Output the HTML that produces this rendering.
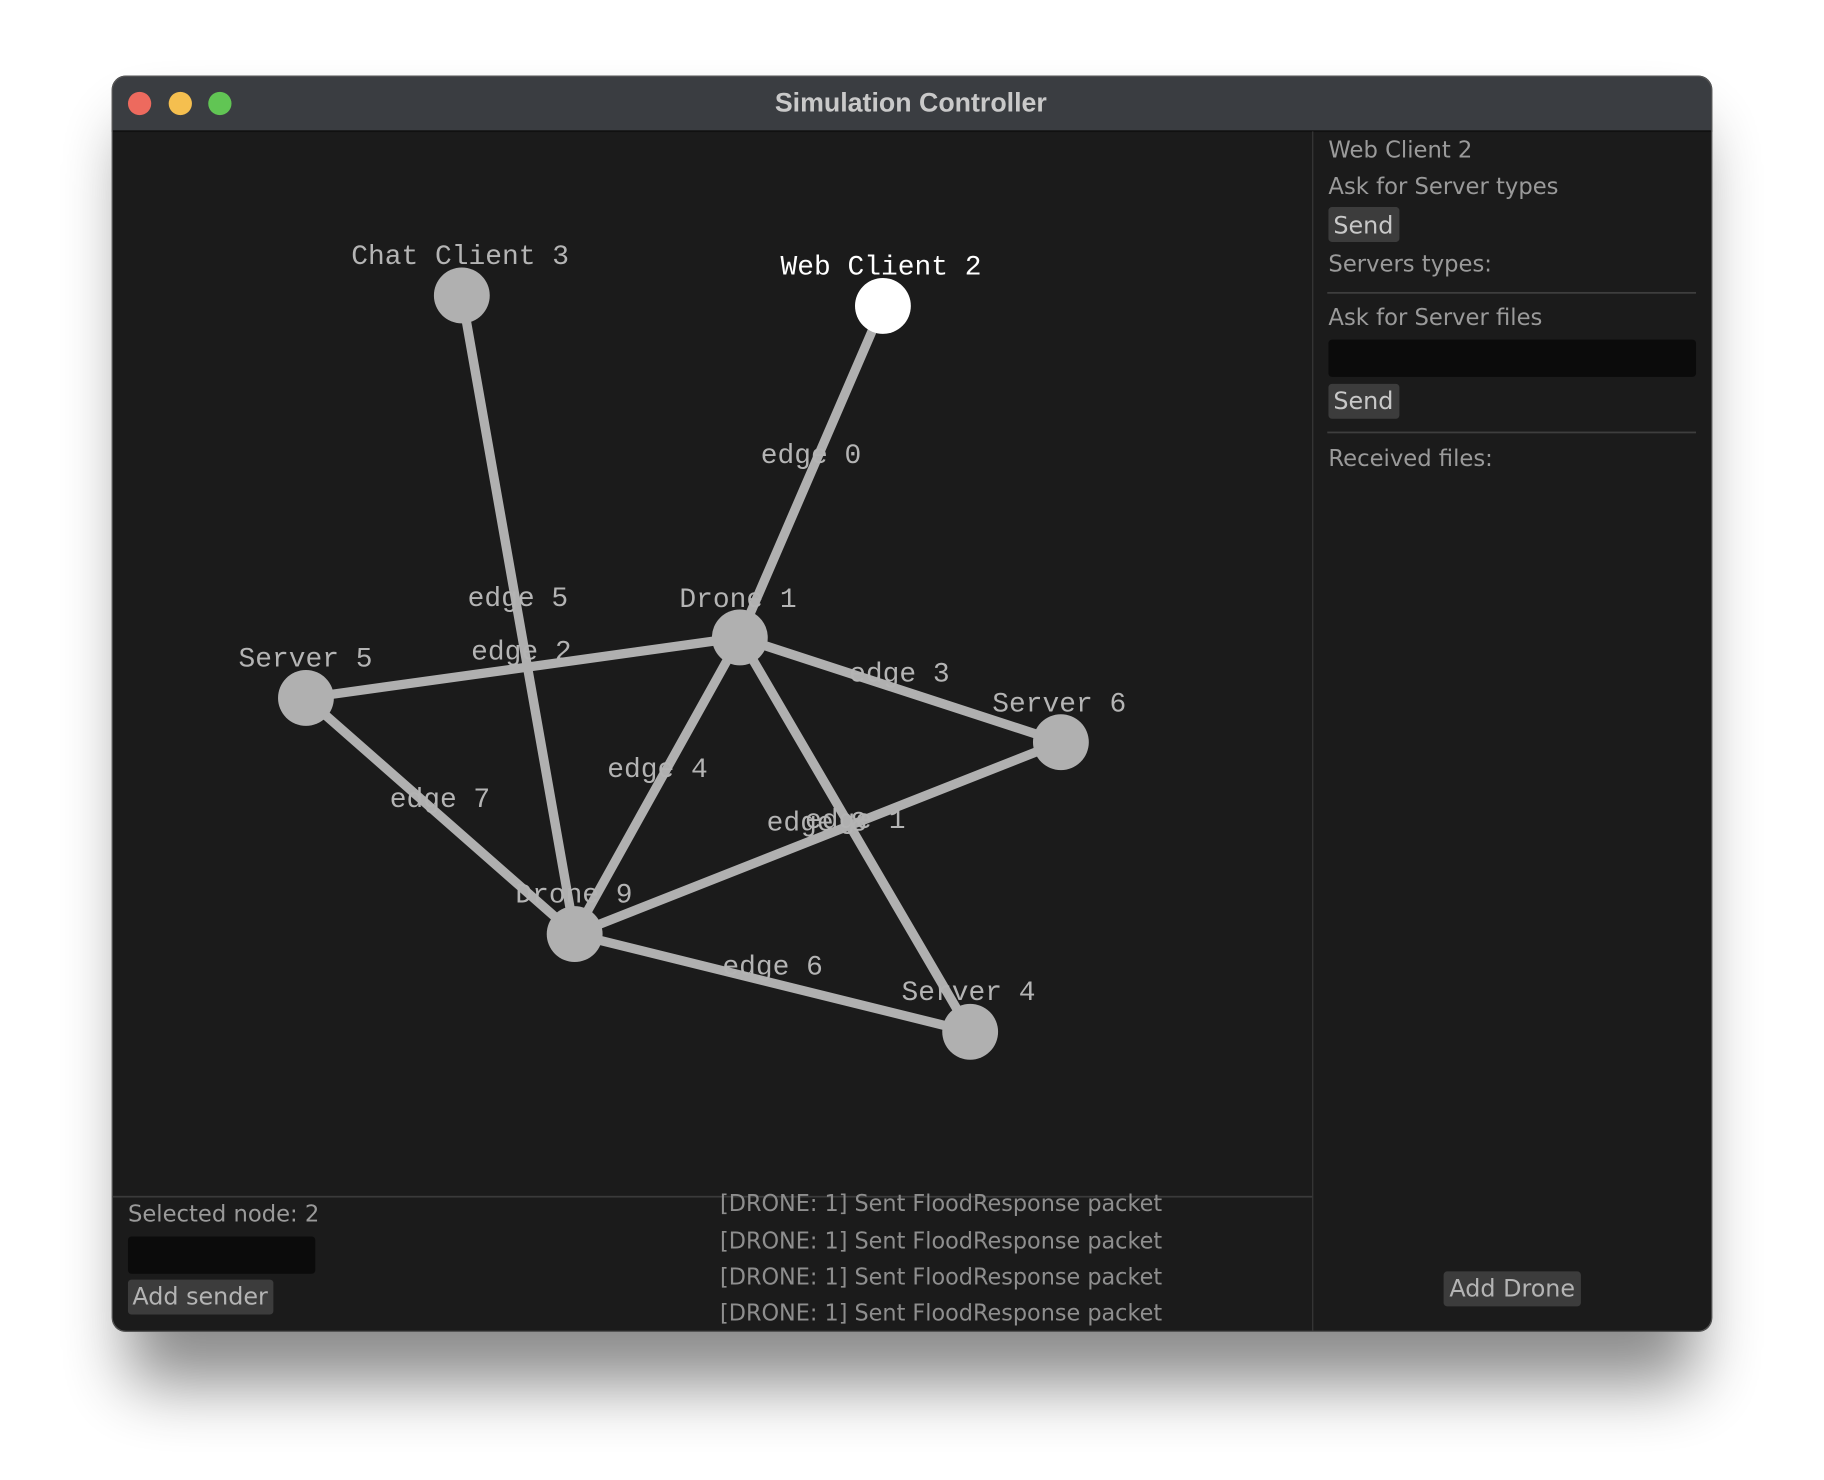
<!DOCTYPE html>
<html><head><meta charset="utf-8"><style>
html,body{margin:0;padding:0;background:#fff;width:1824px;height:1480px;overflow:hidden}
svg{display:block}
.m{font-family:"Liberation Mono","DejaVu Sans Mono",monospace;font-size:24px;fill:#b4b4b4}
.u{font-family:"DejaVu Sans","Liberation Sans",sans-serif;font-size:19.5px;fill:#9a9a9a}
</style></head><body>
<svg width="1824" height="1480" viewBox="0 0 1568 1272.3" xmlns="http://www.w3.org/2000/svg">
<defs>
<filter id="sh" x="-10%" y="-10%" width="120%" height="130%"><feGaussianBlur stdDeviation="28"/></filter>
<clipPath id="win"><rect x="96" y="65" width="1376" height="1080" rx="12"/></clipPath>
</defs>
<rect x="110" y="110" width="1348" height="1080" rx="14" fill="#000" opacity="0.45" filter="url(#sh)"/>
<g clip-path="url(#win)">
<rect x="96" y="65" width="1376" height="1080" fill="#1b1b1b"/>
<rect x="96" y="65" width="1376" height="48" fill="#3a3d41"/>
<rect x="96" y="112" width="1376" height="1.5" fill="#111"/>
</g>
<rect x="96.5" y="65.5" width="1375" height="1079" rx="12" fill="none" stroke="#555" stroke-width="1"/>
<circle cx="120" cy="89" r="10" fill="#ed6a5e"/>
<circle cx="155" cy="89" r="10" fill="#f5bf4f"/>
<circle cx="189" cy="89" r="10" fill="#61c554"/>
<text x="783" y="96" text-anchor="middle" font-family="Liberation Sans,sans-serif" font-weight="bold" font-size="23" fill="#c9c9c9">Simulation Controller</text>

<rect x="1128" y="113" width="1" height="1031" fill="#3a3a3a"/>
<rect x="97" y="1028" width="1031" height="1.5" fill="#3a3a3a"/>

<g stroke="#b0b0b0" stroke-width="8" stroke-linecap="round">
<line x1="759" y1="263" x2="636" y2="548"/>
<line x1="397" y1="254" x2="494" y2="803"/>
<line x1="263" y1="600" x2="636" y2="548"/>
<line x1="636" y1="548" x2="912" y2="638"/>
<line x1="636" y1="548" x2="494" y2="803"/>
<line x1="263" y1="600" x2="494" y2="803"/>
<line x1="494" y1="803" x2="912" y2="638"/>
<line x1="636" y1="548" x2="834" y2="887"/>
<line x1="494" y1="803" x2="834" y2="887"/>
</g>
<g fill="#b0b0b0">
<circle cx="397" cy="254" r="24"/>
<circle cx="636" cy="548" r="24"/>
<circle cx="263" cy="600" r="24"/>
<circle cx="912" cy="638" r="24"/>
<circle cx="494" cy="803" r="24"/>
<circle cx="834" cy="887" r="24"/>
</g>
<circle cx="759" cy="263" r="24" fill="#fff"/>

<g class="m" dominant-baseline="middle">
<text x="302" y="220.5">Chat Client 3</text>
<text x="671" y="229.5" fill="#fff">Web Client 2</text>
<text x="654" y="391.5">edge 0</text>
<text x="402" y="514.5">edge 5</text>
<text x="584" y="515.5">Drone 1</text>
<text x="405" y="560.5">edge 2</text>
<text x="205" y="566.5">Server 5</text>
<text x="730" y="579.5">edge 3</text>
<text x="853" y="605.5">Server 6</text>
<text x="522" y="661.5">edge 4</text>
<text x="335" y="687.5">edge 7</text>
<text x="659" y="707.5">edge 8</text>
<text x="692" y="705.5">edge 1</text>
<text x="443" y="769.5">Drone 9</text>
<text x="621" y="831.5">edge 6</text>
<text x="775" y="853.5">Server 4</text>
</g>

<g class="u" dominant-baseline="middle">
<text x="1142" y="130">Web Client 2</text>
<text x="1142" y="161">Ask for Server types</text>
<text x="1142" y="228">Servers types:</text>
<text x="1142" y="274">Ask for Server files</text>
<text x="1142" y="395">Received files:</text>
</g>
<rect x="1142" y="178" width="61" height="30" rx="3" fill="#3c3c3c"/>
<text x="1172" y="195" text-anchor="middle" dominant-baseline="middle" class="u" style="fill:#c8c8c8;font-size:20.5px">Send</text>
<rect x="1141" y="251" width="317" height="1.5" fill="#3e3e3e"/>
<rect x="1142" y="292" width="316" height="32" rx="3" fill="#0b0b0b"/>
<rect x="1142" y="330" width="61" height="30" rx="3" fill="#3c3c3c"/>
<text x="1172" y="346" text-anchor="middle" dominant-baseline="middle" class="u" style="fill:#c8c8c8;font-size:20.5px">Send</text>
<rect x="1141" y="371" width="317" height="1.5" fill="#3e3e3e"/>
<rect x="1241" y="1093" width="118" height="30" rx="3" fill="#3c3c3c"/>
<text x="1300" y="1109" text-anchor="middle" dominant-baseline="middle" class="u" style="fill:#b4b4b4;font-size:20.5px">Add Drone</text>

<text x="110" y="1044.5" dominant-baseline="middle" class="u">Selected node: 2</text>
<rect x="110" y="1063" width="161" height="32" rx="3" fill="#0b0b0b"/>
<rect x="110" y="1100" width="125" height="30" rx="3" fill="#3c3c3c"/>
<text x="172" y="1116" text-anchor="middle" dominant-baseline="middle" class="u" style="fill:#b4b4b4;font-size:20.5px">Add sender</text>
<g class="u" dominant-baseline="middle" style="fill:#8e8e8e">
<text x="619" y="1035.5" textLength="380" lengthAdjust="spacingAndGlyphs">[DRONE: 1] Sent FloodResponse packet</text>
<text x="619" y="1067.5" textLength="380" lengthAdjust="spacingAndGlyphs">[DRONE: 1] Sent FloodResponse packet</text>
<text x="619" y="1098.5" textLength="380" lengthAdjust="spacingAndGlyphs">[DRONE: 1] Sent FloodResponse packet</text>
<text x="619" y="1129.5" textLength="380" lengthAdjust="spacingAndGlyphs">[DRONE: 1] Sent FloodResponse packet</text>
</g>
</svg>
</body></html>
